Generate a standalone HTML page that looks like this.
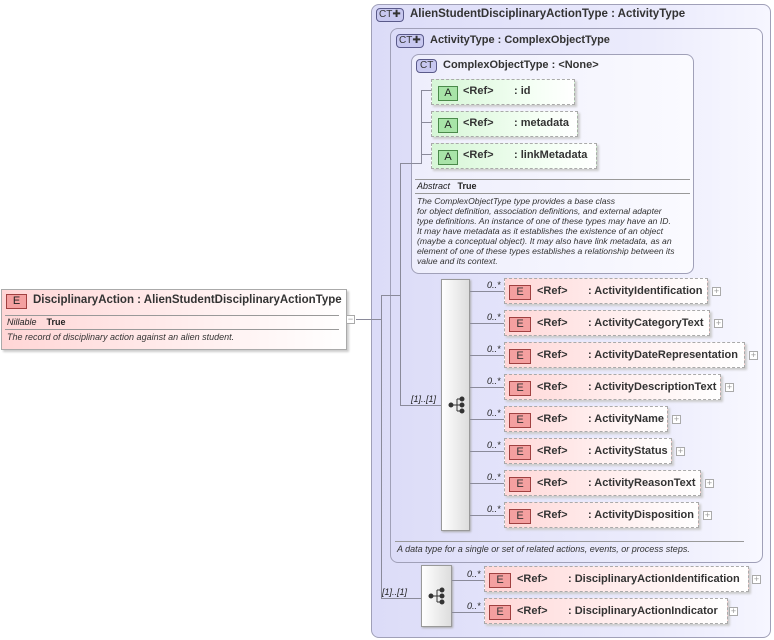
<!DOCTYPE html>
<html><head><meta charset="utf-8"><style>
*{margin:0;padding:0;box-sizing:border-box}
body{width:774px;height:640px;background:#fff;position:relative;overflow:hidden;font-family:"Liberation Sans",Arial,sans-serif;font-size:11px;color:#222}
.a{position:absolute}
.b{font-weight:bold}
.i{font-style:italic}
.ln{position:absolute;background:#8a8a9a}
.ct{position:absolute;border:1px solid #5a5a8a;border-radius:4px;background:#c8c8f0;font-size:10px;height:14px;line-height:12px;padding:0 2px;color:#333}
.el{position:absolute;height:26px;border:1px dashed #aaa;background:linear-gradient(to right,#ffd8d8,#fff4f4 70%,#fff);box-shadow:2px 2px 2px #ccc}
.el .E{position:absolute;left:4px;top:6px;width:22px;height:15px;border:1px solid #a04040;background:#f4a0a0;text-align:center;line-height:13px;font-size:11px;color:#333}
.el .r{position:absolute;left:32px;top:6px;font-weight:bold;color:#333}
.el .n{position:absolute;left:83px;top:6px;font-weight:bold;white-space:nowrap;color:#333}
.pl{position:absolute;width:9px;height:9px;border:1px solid #aaa;background:#fff;font-size:9px;line-height:7px;text-align:center;color:#999}
.at{position:absolute;height:26px;border:1px dashed #aaa;background:linear-gradient(to right,#d6f6d6,#f4fff4 70%,#fff);box-shadow:2px 2px 2px #ccc}
.at .A{position:absolute;left:6px;top:6px;width:20px;height:15px;border:1px solid #4a8a4a;background:#a8e4a8;text-align:center;line-height:13px;font-size:11px}
.at .r{position:absolute;left:31px;top:5px;font-weight:bold;color:#333}
.at .n{position:absolute;left:82px;top:5px;font-weight:bold;white-space:nowrap;color:#333}
.m{position:absolute;font-size:9px;font-style:italic}
</style></head><body>
<div class="a" style="left:371px;top:4px;width:400px;height:634px;border:1px solid #a0a0b8;border-radius:8px;background:linear-gradient(to right,#dcdcf8,#eaeafc 70%,#f6f6ff)"></div>
<div class="ct" style="left:376px;top:8px">CT✚</div>
<div class="a b" style="left:410px;top:8px;font-size:11.5px;color:#333">AlienStudentDisciplinaryActionType : ActivityType</div>
<div class="a" style="left:390px;top:28px;width:373px;height:535px;border:1px solid #a0a0b8;border-radius:8px;background:linear-gradient(to right,#dcdcf8,#ececfc 70%,#f8f8ff)"></div>
<div class="ct" style="left:396px;top:34px">CT✚</div>
<div class="a b" style="left:430px;top:34px;color:#333">ActivityType : ComplexObjectType</div>
<div class="a" style="left:411px;top:54px;width:283px;height:220px;border:1px solid #a0a0b8;border-radius:8px;background:linear-gradient(to right,#eeeefc,#fafaff)"></div>
<div class="ct" style="left:416px;top:59px;padding:0 3px">CT</div>
<div class="a b" style="left:443px;top:59px;color:#333">ComplexObjectType : &lt;None&gt;</div>
<div class="ln" style="left:421px;top:90px;width:1px;height:73px"></div>
<div class="ln" style="left:421px;top:90px;width:11px;height:1px"></div>
<div class="ln" style="left:421px;top:122px;width:11px;height:1px"></div>
<div class="ln" style="left:421px;top:154px;width:11px;height:1px"></div>
<div class="ln" style="left:400px;top:163px;width:22px;height:1px"></div>
<div class="at" style="left:431px;top:79px;width:144px"><div class="A">A</div><div class="r">&lt;Ref&gt;</div><div class="n">: id</div></div>
<div class="at" style="left:431px;top:111px;width:147px"><div class="A">A</div><div class="r">&lt;Ref&gt;</div><div class="n">: metadata</div></div>
<div class="at" style="left:431px;top:143px;width:166px"><div class="A">A</div><div class="r">&lt;Ref&gt;</div><div class="n">: linkMetadata</div></div>
<div class="ln" style="left:415px;top:179px;width:275px;height:1px;background:#999"></div>
<div class="a" style="left:417px;top:181px;font-size:9px"><span class="i">Abstract</span>&nbsp;&nbsp;&nbsp;<b>True</b></div>
<div class="ln" style="left:415px;top:193px;width:275px;height:1px;background:#999"></div>
<div class="a i" style="left:417px;top:196px;font-size:8.6px;line-height:10px;width:280px;color:#333">The ComplexObjectType type provides a base class<br>for object definition, association definitions, and external adapter<br>type definitions. An instance of one of these types may have an ID.<br>It may have metadata as it establishes the existence of an object<br>(maybe a conceptual object). It may also have link metadata, as an<br>element of one of these types establishes a relationship between its<br>value and its context.</div>
<div class="ln" style="left:400px;top:163px;width:1px;height:243px"></div>
<div class="ln" style="left:381px;top:295px;width:20px;height:1px"></div>
<div class="ln" style="left:381px;top:295px;width:1px;height:304px"></div>
<div class="ln" style="left:356px;top:319px;width:26px;height:1px"></div>
<div class="ln" style="left:400px;top:405px;width:42px;height:1px"></div>
<div class="m" style="left:411px;top:394px">[1]..[1]</div>
<div class="a" style="left:441px;top:279px;width:29px;height:252px;border:1px solid #999;background:linear-gradient(to right,#fff,#ddd);box-shadow:1px 1px 2px #aaa"></div>
<svg class="a" style="left:448px;top:396px" width="18" height="18" viewBox="0 0 18 18"><g fill="#333" stroke="#333"><circle cx="3" cy="9" r="2"/><line x1="3" y1="9" x2="9" y2="9"/><line x1="9" y1="3" x2="9" y2="15"/><line x1="9" y1="3" x2="13" y2="3"/><line x1="9" y1="9" x2="13" y2="9"/><line x1="9" y1="15" x2="13" y2="15"/><circle cx="14" cy="3" r="2"/><circle cx="14" cy="9" r="2"/><circle cx="14" cy="15" r="2"/></g></svg>
<div class="ln" style="left:470px;top:291px;width:35px;height:1px"></div>
<div class="ln" style="left:470px;top:323px;width:35px;height:1px"></div>
<div class="ln" style="left:470px;top:355px;width:35px;height:1px"></div>
<div class="ln" style="left:470px;top:387px;width:35px;height:1px"></div>
<div class="ln" style="left:470px;top:419px;width:35px;height:1px"></div>
<div class="ln" style="left:470px;top:451px;width:35px;height:1px"></div>
<div class="ln" style="left:470px;top:483px;width:35px;height:1px"></div>
<div class="ln" style="left:470px;top:515px;width:35px;height:1px"></div>
<div class="m" style="left:487px;top:280px">0..*</div>
<div class="m" style="left:487px;top:312px">0..*</div>
<div class="m" style="left:487px;top:344px">0..*</div>
<div class="m" style="left:487px;top:376px">0..*</div>
<div class="m" style="left:487px;top:408px">0..*</div>
<div class="m" style="left:487px;top:440px">0..*</div>
<div class="m" style="left:487px;top:472px">0..*</div>
<div class="m" style="left:487px;top:504px">0..*</div>
<div class="el" style="left:504px;top:278px;width:204px"><div class="E">E</div><div class="r">&lt;Ref&gt;</div><div class="n">: ActivityIdentification</div></div><div class="pl" style="left:712px;top:287px">+</div>
<div class="el" style="left:504px;top:310px;width:206px"><div class="E">E</div><div class="r">&lt;Ref&gt;</div><div class="n">: ActivityCategoryText</div></div><div class="pl" style="left:714px;top:319px">+</div>
<div class="el" style="left:504px;top:342px;width:241px"><div class="E">E</div><div class="r">&lt;Ref&gt;</div><div class="n">: ActivityDateRepresentation</div></div><div class="pl" style="left:749px;top:351px">+</div>
<div class="el" style="left:504px;top:374px;width:217px"><div class="E">E</div><div class="r">&lt;Ref&gt;</div><div class="n">: ActivityDescriptionText</div></div><div class="pl" style="left:725px;top:383px">+</div>
<div class="el" style="left:504px;top:406px;width:164px"><div class="E">E</div><div class="r">&lt;Ref&gt;</div><div class="n">: ActivityName</div></div><div class="pl" style="left:672px;top:415px">+</div>
<div class="el" style="left:504px;top:438px;width:168px"><div class="E">E</div><div class="r">&lt;Ref&gt;</div><div class="n">: ActivityStatus</div></div><div class="pl" style="left:676px;top:447px">+</div>
<div class="el" style="left:504px;top:470px;width:197px"><div class="E">E</div><div class="r">&lt;Ref&gt;</div><div class="n">: ActivityReasonText</div></div><div class="pl" style="left:705px;top:479px">+</div>
<div class="el" style="left:504px;top:502px;width:195px"><div class="E">E</div><div class="r">&lt;Ref&gt;</div><div class="n">: ActivityDisposition</div></div><div class="pl" style="left:703px;top:511px">+</div>
<div class="ln" style="left:395px;top:541px;width:349px;height:1px;background:#999"></div>
<div class="a i" style="left:397px;top:544px;font-size:9px;color:#333">A data type for a single or set of related actions, events, or process steps.</div>
<div class="ln" style="left:381px;top:598px;width:41px;height:1px"></div>
<div class="m" style="left:382px;top:587px">[1]..[1]</div>
<div class="a" style="left:421px;top:565px;width:31px;height:62px;border:1px solid #999;background:linear-gradient(to right,#fff,#ddd);box-shadow:1px 1px 2px #aaa"></div>
<svg class="a" style="left:428px;top:587px" width="18" height="18" viewBox="0 0 18 18"><g fill="#333" stroke="#333"><circle cx="3" cy="9" r="2"/><line x1="3" y1="9" x2="9" y2="9"/><line x1="9" y1="3" x2="9" y2="15"/><line x1="9" y1="3" x2="13" y2="3"/><line x1="9" y1="9" x2="13" y2="9"/><line x1="9" y1="15" x2="13" y2="15"/><circle cx="14" cy="3" r="2"/><circle cx="14" cy="9" r="2"/><circle cx="14" cy="15" r="2"/></g></svg>
<div class="ln" style="left:452px;top:580px;width:33px;height:1px"></div>
<div class="ln" style="left:452px;top:612px;width:33px;height:1px"></div>
<div class="m" style="left:467px;top:569px">0..*</div>
<div class="m" style="left:467px;top:601px">0..*</div>
<div class="el" style="left:484px;top:566px;width:265px"><div class="E">E</div><div class="r">&lt;Ref&gt;</div><div class="n">: DisciplinaryActionIdentification</div></div><div class="pl" style="left:752px;top:575px">+</div>
<div class="el" style="left:484px;top:598px;width:244px"><div class="E">E</div><div class="r">&lt;Ref&gt;</div><div class="n">: DisciplinaryActionIndicator</div></div><div class="pl" style="left:729px;top:607px">+</div>
<div class="a" style="left:1px;top:289px;width:346px;height:61px;border:1px solid #aaa;background:linear-gradient(to right,#ffd6d6,#fff0f0 60%,#fff);box-shadow:2px 2px 2px #ccc"></div>
<div class="a" style="left:6px;top:294px;width:21px;height:15px;border:1px solid #a04040;background:#f4a0a0;text-align:center;line-height:13px">E</div>
<div class="a b" style="left:33px;top:294px;font-size:11.5px;color:#333">DisciplinaryAction : AlienStudentDisciplinaryActionType</div>
<div class="ln" style="left:5px;top:315px;width:334px;height:1px;background:#999"></div>
<div class="a" style="left:7px;top:317px;font-size:9px"><span class="i">Nillable</span>&nbsp;&nbsp;&nbsp;&nbsp;<b>True</b></div>
<div class="ln" style="left:5px;top:329px;width:334px;height:1px;background:#999"></div>
<div class="a i" style="left:7px;top:332px;font-size:9px;color:#333">The record of disciplinary action against an alien student.</div>
<div class="pl" style="left:346px;top:315px;line-height:6px">−</div>
</body></html>
